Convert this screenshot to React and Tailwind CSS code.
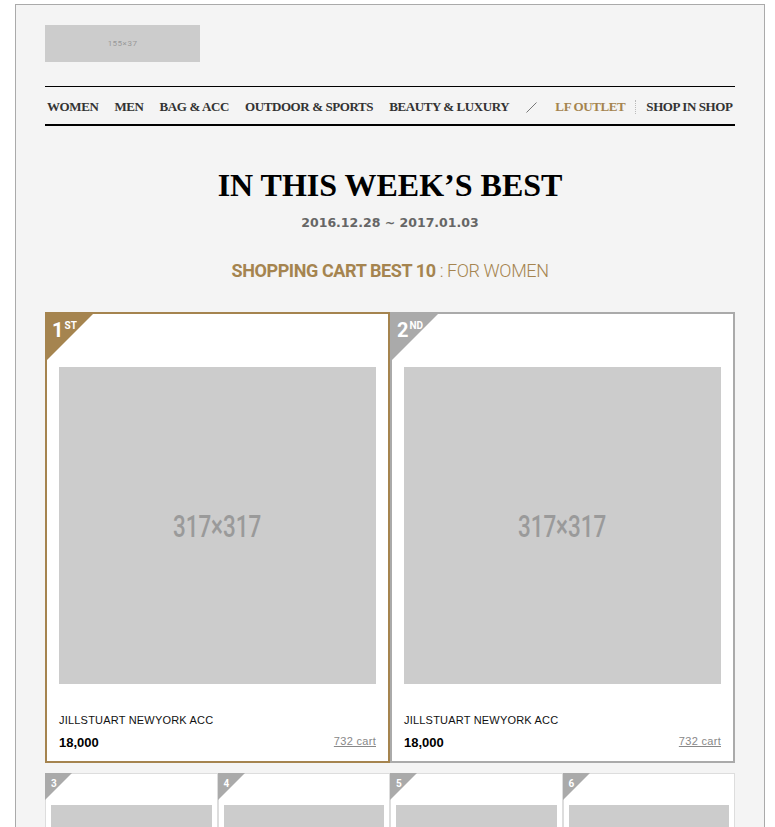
import React from "react";

const GOLD = "text-[#a5844f]";

const navItems = ["WOMEN", "MEN", "BAG & ACC", "OUTDOOR & SPORTS", "BEAUTY & LUXURY"];

const smallItems = [3, 4, 5, 6];

const Placeholder = ({ label }) => (
    <div className="w-[317px] h-[317px] bg-[#cccccc] flex items-center justify-center">
        <span className="font-['Roboto'] font-medium text-[32px] text-[#9a9a9a] scale-x-[0.7]">{label}</span>
    </div>
);

const BigCard = ({ rank, suffix, gold }) => (
    <div
        className={`relative bg-white border-2 ${gold ? "border-[#a5844f]" : "border-[#aaaaaa]"} px-[12px] pt-[53px] pb-[10px]`}
    >
        {/* rank badge */}
        <svg className="absolute -left-[2px] -top-[2px]" width="50" height="50" viewBox="0 0 50 50">
            <polygon points="0,0 50,0 0,50" fill={gold ? "#a5844f" : "#aaaaaa"} />
        </svg>
        <div className="absolute left-[5px] top-[4px] flex items-start text-white font-['Roboto'] font-bold">
            <span className="text-[20px] leading-[24px]">{rank}</span>
            <span className="text-[10px] leading-[12px] ml-[1px] mt-[2px]">{suffix}</span>
        </div>

        <Placeholder label="317×317" />

        <p className="mt-[29px] font-['Liberation_Sans'] text-[11px] leading-[14px] tracking-[0.2px] text-[#111]">
            JILLSTUART NEWYORK ACC
        </p>
        <div className="mt-[8px] flex justify-between items-start">
            <span className="font-['Liberation_Sans'] font-bold text-[13px] leading-[16px] text-black">18,000</span>
            <a className="font-['Liberation_Sans'] text-[11px] leading-[12px] tracking-[0.3px] text-[#888] underline">
                732 cart
            </a>
        </div>
    </div>
);

const SmallCard = ({ rank }) => (
    <div className="relative bg-white border border-[#dddddd] px-[5px] pt-[31px] pb-[10px]">
        <svg className="absolute -left-[1px] -top-[1px]" width="27" height="27" viewBox="0 0 27 27">
            <polygon points="0,0 27,0 0,27" fill="#aaaaaa" />
        </svg>
        <span className="absolute left-[5px] top-[4px] font-['Roboto'] font-bold text-[10px] leading-[12px] text-white">
            {rank}
        </span>
        <div className="w-full h-[160px] bg-[#cccccc]" />
    </div>
);

const App = () => {
    return (
        <div className="bg-white min-h-[827px] pt-[4px]">
            <div className="ml-[15px] w-[750px] border border-[#aaaaaa] bg-[#f4f4f4] px-[29px] pt-[20px] pb-[40px]">
                {/* logo */}
                <div className="w-[155px] h-[37px] bg-[#cccccc] flex items-center justify-center">
                    <span className="font-['Roboto'] text-[8px] text-[#999] tracking-[0.5px]">155×37</span>
                </div>

                {/* nav */}
                <nav className="mt-[24px] border-t border-black border-b-2 h-[40px] flex items-center pl-[2px] pt-[3px] font-['Liberation_Serif'] font-bold text-[13px] tracking-[-0.4px] text-[#333]">
                    {navItems.map((item, i) => (
                        <span key={item} className={i === 0 ? "" : "ml-[16px]"}>
                            {item}
                        </span>
                    ))}
                    <svg className="ml-[17px]" width="11" height="11" viewBox="0 0 11 11">
                        <line x1="0.5" y1="10.5" x2="10.5" y2="0.5" stroke="#777" strokeWidth="1" />
                    </svg>
                    <span className={`ml-[18px] ${GOLD}`}>LF OUTLET</span>
                    <span className="ml-[10px] h-[14px] border-l border-dotted border-[#bbb]" />
                    <span className="ml-[10px]">SHOP IN SHOP</span>
                </nav>

                {/* heading */}
                <h1 className="mt-[41px] text-center font-['Liberation_Serif'] font-bold text-[32px] leading-[36px] text-black">
                    IN THIS WEEK’S BEST
                </h1>
                <p className="mt-[12px] text-center font-['DejaVu_Sans'] font-bold text-[12.5px] leading-[16px] text-[#666]">
                    2016.12.28 ~ 2017.01.03
                </p>
                <p className={`mt-[29px] text-center font-['Roboto'] text-[18px] leading-[22px] tracking-[-0.4px] ${GOLD}`}>
                    <span className="font-bold">SHOPPING CART BEST 10</span>
                    <span className="font-light"> : FOR WOMEN</span>
                </p>

                {/* top 2 */}
                <div className="mt-[30px] grid grid-cols-2">
                    <BigCard rank="1" suffix="ST" gold />
                    <BigCard rank="2" suffix="ND" />
                </div>

                {/* rest */}
                <div className="mt-[10px] grid grid-cols-4">
                    {smallItems.map((n) => (
                        <SmallCard key={n} rank={n} />
                    ))}
                </div>
            </div>
        </div>
    );
};

export default App;
